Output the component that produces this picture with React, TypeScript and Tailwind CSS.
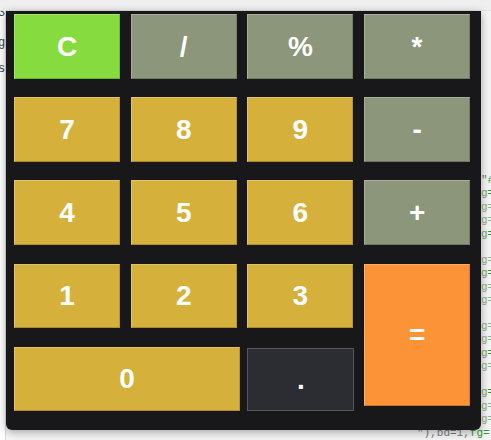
import type { ReactNode } from 'react';

type Tone = 'clear' | 'op' | 'num' | 'equals' | 'dot';

const TONES: Record<Tone, string> = {
  clear: 'bg-[#86dc3e]',
  op: 'bg-[#8b967a]',
  num: 'bg-[#d5b13c]',
  equals: 'bg-[#fd9337]',
  dot: 'bg-[#2b2d33] border-[#55575e]',
};

function Key({ tone, className = '', children }: { tone: Tone; className?: string; children: ReactNode }) {
  const edge =
    tone === 'dot'
      ? 'border'
      : 'border border-t-white/25 border-l-white/25 border-r-black/15 border-b-black/20';
  return (
    <button
      type="button"
      className={`flex items-center justify-center text-white font-bold text-[28px] leading-none ${edge} ${TONES[tone]} ${className}`}
      style={{ fontFamily: '"Liberation Sans", Arial, sans-serif' }}
    >
      {children}
    </button>
  );
}

/** Right-edge fragments of the editor behind the window. Null = blank line. */
const CODE_LINES: (null | { text: ReactNode; wide?: boolean })[] = [
  { text: <><span className="text-[#777]">"</span><span className="text-[#2a9a2a]">#</span></> },
  { text: <><span className="text-[#7aa57a]">g</span><span className="text-[#0e9a0e]">=</span></> },
  { text: <><span className="text-[#8fb08f]">g</span><span className="text-[#7fb87f]">=</span></> },
  { text: <><span className="text-[#8fb08f]">g</span><span className="text-[#7fb87f]">=</span></> },
  { text: <><span className="text-[#7aa57a]">g</span><span className="text-[#0e9a0e]">=</span></> },
  null,
  { text: <><span className="text-[#8fb08f]">g</span><span className="text-[#7fb87f]">=</span></> },
  { text: <><span className="text-[#7aa57a]">g</span><span className="text-[#0e9a0e]">=</span></> },
  { text: <><span className="text-[#8fb08f]">g</span><span className="text-[#7fb87f]">=</span></> },
  { text: <><span className="text-[#8fb08f]">g</span><span className="text-[#7fb87f]">=</span></> },
  null,
  { text: <><span className="text-[#8fb08f]">g</span><span className="text-[#7fb87f]">=</span></> },
  { text: <><span className="text-[#8fb08f]">g</span><span className="text-[#7fb87f]">=</span></> },
  { text: <><span className="text-[#7aa57a]">g</span><span className="text-[#0e9a0e]">=</span></> },
  { text: <><span className="text-[#8fb08f]">g</span><span className="text-[#7fb87f]">=</span></> },
  null,
  { text: <><span className="text-[#7aa57a]">g</span><span className="text-[#0e9a0e]">=</span></> },
  { text: <><span className="text-[#8fb08f]">g</span><span className="text-[#7fb87f]">=</span></> },
  { text: <><span className="text-[#8fb08f]">g</span><span className="text-[#7fb87f]">=</span></> },
  {
    wide: true,
    text: (
      <>
        <span className="text-[#7a7a7a]">"),bd=1,</span>
        <span className="text-[#2a9a2a]">fg=</span>
      </>
    ),
  },
];

export default function App() {
  return (
    <div className="relative w-[491px] h-[440px] overflow-hidden bg-[#f4f4f4]">
      {/* editor behind the calculator window */}
      <div className="flex flex-col w-full h-full">
        <div className="h-[11px] bg-[#efefef] border-b border-[#e2e2e2]" />
        <div className="flex flex-1">
          <div
            className="w-[6px] bg-white overflow-hidden flex flex-col text-[12px] leading-none text-[#444] border-r border-[#ddd]"
            style={{ fontFamily: '"Liberation Mono", monospace' }}
          >
            <span className="-ml-[2px] -mt-[4px]">3</span>
            <span className="-ml-[2px] mt-[18px]">g</span>
            <span className="-ml-[2px] mt-[14px]">s</span>
          </div>
          <div className="flex-1" />
        </div>
      </div>

      <div
        className="absolute inset-0 pt-[174px] flex flex-col text-[11px] leading-[13.42px] whitespace-nowrap"
        style={{ fontFamily: '"Liberation Mono", monospace' }}
      >
        {CODE_LINES.map((line, i) => (
          <div key={i} className={`h-[13.42px] ${line?.wide ? 'pl-[417px]' : 'pl-[481px]'}`}>
            {line ? line.text : ''}
          </div>
        ))}
      </div>

      {/* calculator window */}
      <div className="absolute left-[6px] top-[11px] w-[475px] h-[419px] bg-[#18181b] rounded-b-[6px] shadow-[0_2px_8px_rgba(0,0,0,0.35)]">
        <div className="grid grid-cols-[106px_106px_106px_106px] grid-rows-[65px_65px_65px_65px_65px] gap-x-[10.7px] gap-y-[18px] pl-[8px] pt-[3px]">
          <Key tone="clear">C</Key>
          <Key tone="op">/</Key>
          <Key tone="op">%</Key>
          <Key tone="op">*</Key>

          <Key tone="num">7</Key>
          <Key tone="num">8</Key>
          <Key tone="num">9</Key>
          <Key tone="op">-</Key>

          <Key tone="num">4</Key>
          <Key tone="num">5</Key>
          <Key tone="num">6</Key>
          <Key tone="op">+</Key>

          <Key tone="num" className="mt-[1px]">1</Key>
          <Key tone="num" className="mt-[1px]">2</Key>
          <Key tone="num" className="mt-[1px]">3</Key>
          <Key tone="equals" className="row-span-2 self-start h-[142px] mt-[1px]">=</Key>

          <Key tone="num" className="col-span-2 w-[226px] mt-[1px]">0</Key>
          <Key tone="dot" className="mt-[2px] w-[107px]">.</Key>
        </div>
      </div>
    </div>
  );
}
